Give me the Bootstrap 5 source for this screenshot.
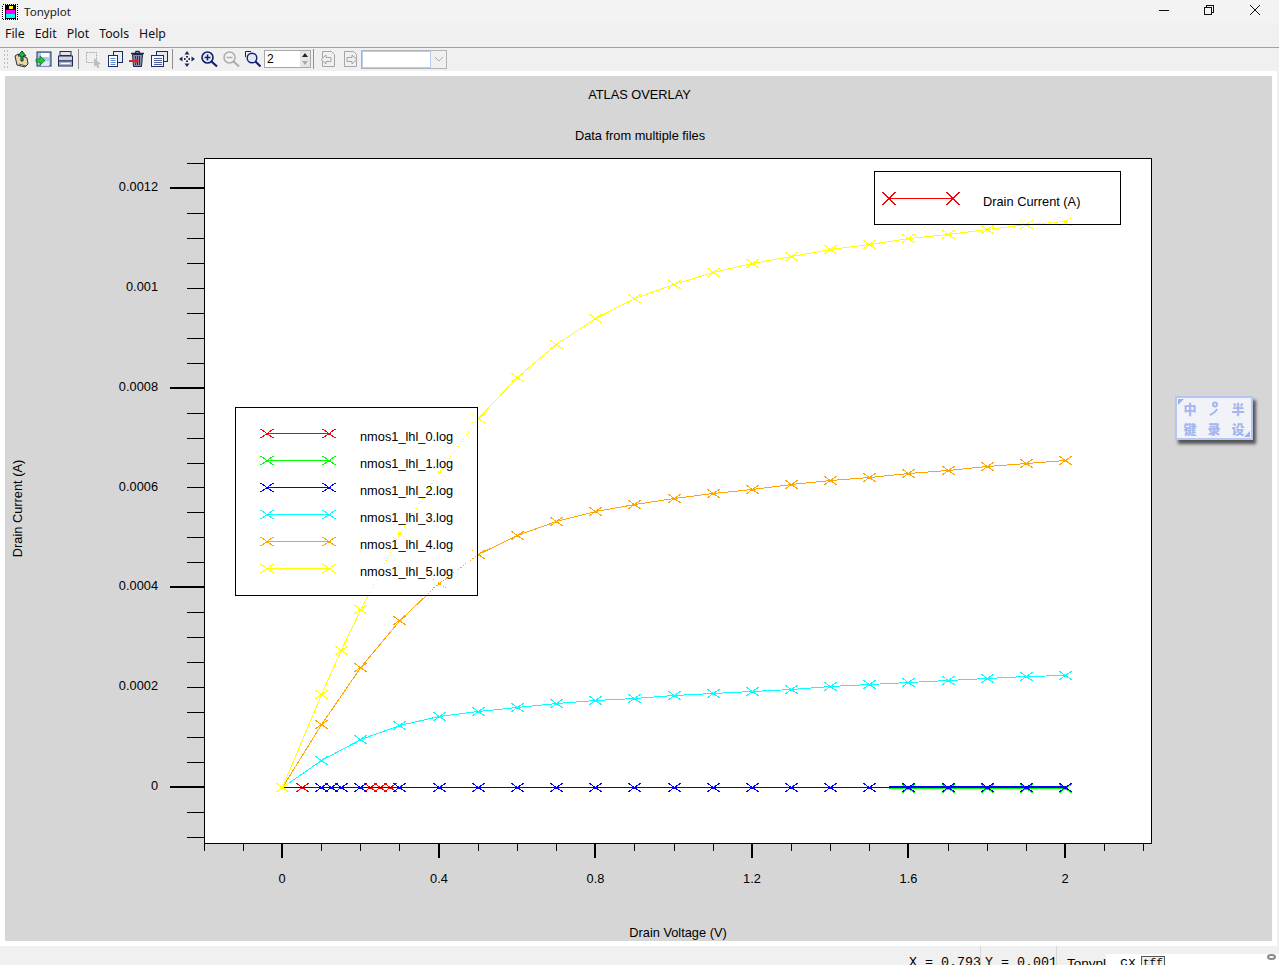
<!DOCTYPE html>
<html lang="en">
<head>
<meta charset="utf-8">
<title>Tonyplot</title>
<link href="https://cdn.jsdelivr.net/npm/bootstrap@5.3.0/dist/css/bootstrap.min.css" rel="stylesheet">
<style>
html,body{margin:0;height:965px;overflow:hidden;background:#f0f0f0}
.app-win{width:1279px;height:965px;overflow:hidden;position:relative;font-family:"Liberation Sans",Arial,sans-serif;color:#000}
.title-bar{height:23px;background:#f3f3f3;font:11.6px "Noto Sans",sans-serif;color:#222}
.title-ico{margin:0 5px 0 2px}
.win-btns{margin-left:auto}
.win-btns svg{display:block}
.menu-bar{height:25px;background:#f0f0f0;border-bottom:1px solid #a0a0a0;padding:0 0 3px 5px;gap:10px;font:12.3px "Noto Sans",sans-serif;color:#111}
.tool-bar{height:23px;background:#f0f0f0;padding:0 0 1px 3px}
.tool-grip{width:6px;height:20px;margin-right:1px;background-image:radial-gradient(#bdbdbd 1px,transparent 1px);background-size:3px 4px}
.tool-sep{width:1px;height:20px;background:#8f8f8f;margin:0 3px 0 2px}
.tool-ico{width:22px;height:22px;flex:none}
.spin-box{width:47px;height:18px;background:#fff;border:1px solid #a8a8a8;font-size:12px;line-height:16px;padding-left:2px;position:relative}
.spin-arrows{margin-left:auto;width:10px;height:16px;background:#e6e6e6}
.combo-box{width:86px;height:19px;background:#f0f0f0;border:1px solid #b0b4b8}
.combo-field{width:69px;height:17px;background:#fff;border:1px solid #b5cdee}
.combo-arrow{flex:1}
.plot-frame{height:875px;width:1277px;background:#fff;padding:5px}
.plot-area{height:865px;width:1267px;background:#d6d6d6}
.plot-area svg{display:block}
.plot-txt{font:12.8px "Liberation Sans",Arial,sans-serif;fill:#000}
.status-row{height:19px;background:#f0f0f0;overflow:hidden}
.stat-cell{font:13.33px "Liberation Mono",monospace;width:76px;height:19px;padding-top:7px;line-height:19px;white-space:pre;border-right:1px solid #d8d8d8}
.stat-app{font:13.5px "Liberation Sans",Arial,sans-serif;width:39px;margin-left:10px;padding-top:8px;line-height:19px;overflow:hidden;height:19px}
.stat-tray{flex:1;height:11px;margin-top:8px;background:#fff;font:13.33px "Liberation Mono",monospace;line-height:17px;padding-left:14px;position:relative;overflow:hidden}
.tray-tag{display:inline-block;border:1px solid #555;font-size:11px;line-height:13px;padding:0 1px;margin-left:5px;background:#eee}
.tray-dot{position:absolute;right:3px;top:0;width:9px;height:6px;border:2px solid #888;border-radius:50%}
.ime-float{position:absolute;left:1175px;top:396px;width:78px;height:44px;background:#f1f3f8;border:2px solid #b4c6f1;box-shadow:3px 4px 3px #555;display:grid;grid-template-columns:repeat(3,1fr);font:900 13px/19px "Noto Sans CJK SC",sans-serif;color:#a3b7ee;text-align:center;padding:1px 1px 0}
.ime-float::before{content:"";position:absolute;left:1px;top:1px;border-top:6px solid #9eb1e2;border-right:6px solid transparent}
.ime-float::after{content:"";position:absolute;right:1px;bottom:1px;border-bottom:6px solid #9eb1e2;border-left:6px solid transparent}
.ime-moon{display:flex;align-items:center;justify-content:center}
</style>
</head>
<body>
<div class="app-win d-flex flex-column">
  <div class="title-bar d-flex align-items-center">
    <svg class="title-ico" width="17" height="17" viewBox="0 0 17 17" shape-rendering="crispEdges"><rect x=".5" y="1.500" width="15" height="15" fill="#fff" stroke="#000" stroke-dasharray="1 1"/><rect x="3" y="2" width="11" height="14" fill="#000"/><rect x="6" y="2" width="5" height="4" fill="#ff0" stroke="#000"/><rect x="4" y="7" width="9" height="4" fill="#f0f"/><rect x="4" y="11" width="9" height="4" fill="#0ff"/></svg>
    <span>Tonyplot</span>
    <svg class="win-btns" width="120" height="23" viewBox="1159 0 120 23" fill="none" stroke="#111" shape-rendering="crispEdges"><path d="M1159 10.500h10"/><rect x="1204.500" y="7.500" width="7" height="7"/><path d="M1206.500 7V5.500h7v7H1212"/><path d="M1250 5l10 10M1260 5l-10 10" shape-rendering="auto"/></svg>
  </div>
  <div class="menu-bar d-flex align-items-center">
    <span>File</span><span>Edit</span><span>Plot</span><span>Tools</span><span>Help</span>
  </div>
  <div class="tool-bar d-flex align-items-center">
    <div class="tool-grip"></div>
    <svg class="tool-ico" viewBox="0 0 22 22"><path d="M5 8l3-2 9 4 1 6-3 3-8-2z" fill="#e8d9a0" stroke="#2b2b55"/><path d="M9 16l7 2" stroke="#555"/><path d="M11 13V8H8l4-5 4 5h-3v5z" fill="#16c72e" stroke="#134"/></svg>
    <svg class="tool-ico" viewBox="0 0 22 22"><rect x="5" y="4" width="14" height="14" fill="#a9cbe8" stroke="#1c2a66"/><rect x="9" y="5" width="8" height="4" fill="#fff"/><rect x="9" y="13" width="8" height="5" fill="#dfe9f3"/><path d="M4 11h4V8l5 4.500L8 17v-3H4z" fill="#18d02e" stroke="#0b5c2e" stroke-width=".7"/></svg>
    <svg class="tool-ico" viewBox="0 0 22 22"><rect x="6" y="3.500" width="11" height="4" fill="#e3e3e3" stroke="#1f2a5a"/><rect x="4.500" y="8" width="14" height="5" fill="#d0d3dd" stroke="#1f2a5a"/><rect x="4.500" y="13" width="14" height="5" fill="#aeb4c6" stroke="#1f2a5a"/><path d="M7 15.500h9" stroke="#fff"/></svg>
    <div class="tool-sep"></div>
    <svg class="tool-ico" viewBox="0 0 22 22"><rect x="4.500" y="4.500" width="10" height="10" fill="none" stroke="#aaa" stroke-dasharray="2 1"/><path d="M12 10l7 6-3 .5 1.500 3-2 .5-1.500-3-2 2z" fill="#bdbdbd"/></svg>
    <svg class="tool-ico" viewBox="0 0 22 22"><rect x="9.500" y="3.500" width="9" height="11" fill="#e8eef6" stroke="#1f2a66"/><rect x="4.500" y="7.500" width="9" height="11" fill="#fff" stroke="#1f2a66"/><path d="M6.500 10.500h5M6.500 12.500h5M6.500 14.500h5M6.500 16.500h5" stroke="#5a8ccc"/></svg>
    <svg class="tool-ico" viewBox="0 0 22 22"><path d="M5 5.500h13M9 5.500l1-2h3l1 2" fill="none" stroke="#1d2450" stroke-width="1.300"/><path d="M6.500 6.500h10l-1 12h-8z" fill="#8a8da0" stroke="#1d2450"/><path d="M9.500 8v9M11.500 8v9M13.500 8v9" stroke="#2a2f55"/><path d="M3 12h6v-2l4 3-4 3v-2H3z" fill="#e0202a"/></svg>
    <svg class="tool-ico" viewBox="0 0 22 22"><rect x="8.500" y="3.500" width="11" height="10" fill="#dfe8f3" stroke="#1f2a66"/><rect x="3.500" y="7.500" width="12" height="11" fill="#f4f6fb" stroke="#1f2a66"/><path d="M6 10.500h8M6 12.500h8M6 14.500h8M6 16.500h8" stroke="#4d5f9a"/></svg>
    <div class="tool-sep"></div>
    <svg class="tool-ico" viewBox="0 0 22 22" fill="#1d2a55"><path d="M11 3l2.500 3.500h-5zM11 19l-2.500-3.500h5zM3 11l3.500-2.500v5zM19 11l-3.500 2.500v-5z"/><rect x="10" y="8" width="2" height="1.500"/><rect x="10" y="12.500" width="2" height="1.500"/><rect x="8" y="10" width="1.500" height="2"/><rect x="12.500" y="10" width="1.500" height="2"/></svg>
    <svg class="tool-ico" viewBox="0 0 22 22"><circle cx="9.500" cy="9.500" r="5.500" fill="#e9eefc" stroke="#14206e" stroke-width="1.600"/><path d="M13.500 13.500l5.500 5" stroke="#14206e" stroke-width="2.200"/><path d="M6.500 9.500h6M9.500 6.500v6" stroke="#14206e" stroke-width="1.600"/></svg>
    <svg class="tool-ico" viewBox="0 0 22 22"><circle cx="9.500" cy="9.500" r="5.500" fill="#f3f3f3" stroke="#adadad" stroke-width="1.500"/><path d="M13.500 13.500l5.500 5" stroke="#adadad" stroke-width="2.200"/><path d="M6.500 9.500h6" stroke="#adadad" stroke-width="1.500"/></svg>
    <svg class="tool-ico" viewBox="0 0 22 22"><path d="M9 3.500H3.500V9" fill="none" stroke="#14206e"/><circle cx="10" cy="10" r="4.800" fill="#dfe7f6" stroke="#14206e" stroke-width="1.400"/><path d="M13.500 13.500l5 5" stroke="#14206e" stroke-width="2.200"/></svg>
    <div class="spin-box d-flex">2<div class="spin-arrows"><svg width="10" height="16" viewBox="0 0 10 16" class="d-block"><path d="M5 2l3 4H2z" fill="#222"/><path d="M5 14l3-4H2z" fill="#aaa"/></svg></div></div>
    <div class="tool-sep"></div>
    <svg class="tool-ico" viewBox="0 0 22 22" fill="none" stroke="#a6a6a6"><path d="M5.500 3.500h9l3 3v12h-12z"/><path d="M9 7v2.500h5v4H9V16l-5-4.500z" fill="#eee"/></svg>
    <svg class="tool-ico" viewBox="0 0 22 22" fill="none" stroke="#a6a6a6"><path d="M5.500 3.500h9l3 3v12h-12z"/><path d="M13 7v2.500H8v4h5V16l5-4.500z" fill="#eee"/></svg>
    <div class="combo-box d-flex"><div class="combo-field"></div><div class="combo-arrow d-flex align-items-center justify-content-center"><svg width="10" height="6" viewBox="0 0 10 6" fill="none" stroke="#aaa"><path d="M1 1l4 4 4-4"/></svg></div></div>
  </div>
  <div class="plot-frame">
    <div class="plot-area">
      <svg id="plotSvg" width="1267" height="865" viewBox="5 76 1267 865">
        <defs>
          <clipPath id="clipMain"><rect x="236" y="408" width="241" height="187"/></clipPath>
          <clipPath id="clipTop"><rect x="875" y="172" width="245" height="52"/></clipPath>
        </defs>
        <rect x="204.500" y="158.500" width="947" height="685" fill="#fff" stroke="#000"/>
        <g id="curveLayer" shape-rendering="crispEdges" fill="none"></g>
        <g text-anchor="middle">
          <text class="plot-txt" x="639.500" y="99">ATLAS OVERLAY</text>
          <text class="plot-txt" x="640" y="140">Data from multiple files</text>
          <text class="plot-txt" x="678" y="937">Drain Voltage (V)</text>
          <text class="plot-txt" transform="translate(22 508.500) rotate(-90)">Drain Current (A)</text>
          <text class="plot-txt" x="282" y="883">0</text>
          <text class="plot-txt" x="439" y="883">0.4</text>
          <text class="plot-txt" x="595.500" y="883">0.8</text>
          <text class="plot-txt" x="752" y="883">1.2</text>
          <text class="plot-txt" x="908.500" y="883">1.6</text>
          <text class="plot-txt" x="1065" y="883">2</text>
        </g>
        <g text-anchor="end">
          <text class="plot-txt" x="158" y="191">0.0012</text>
          <text class="plot-txt" x="158" y="291">0.001</text>
          <text class="plot-txt" x="158" y="391">0.0008</text>
          <text class="plot-txt" x="158" y="491">0.0006</text>
          <text class="plot-txt" x="158" y="590">0.0004</text>
          <text class="plot-txt" x="158" y="690">0.0002</text>
          <text class="plot-txt" x="158" y="790">0</text>
        </g>
        <text class="plot-txt" x="360" y="441">nmos1_lhl_0.log</text>
        <text class="plot-txt" x="360" y="468">nmos1_lhl_1.log</text>
        <text class="plot-txt" x="360" y="495">nmos1_lhl_2.log</text>
        <text class="plot-txt" x="360" y="522">nmos1_lhl_3.log</text>
        <text class="plot-txt" x="360" y="549">nmos1_lhl_4.log</text>
        <text class="plot-txt" x="360" y="576">nmos1_lhl_5.log</text>
        <text class="plot-txt" x="983" y="206">Drain Current (A)</text>
      </svg>
    </div>
  </div>
  <div class="status-row d-flex">
    <div class="stat-cell" style="margin-left:905px;padding-left:4px">X = 0.793</div>
    <div class="stat-cell" style="padding-left:4px">Y = 0.001</div>
    <div class="stat-app">Tonypl</div>
    <div class="stat-tray">cx<span class="tray-tag">tff</span><span class="tray-dot"></span></div>
  </div>
  <div class="ime-float">
    <span>中</span>
    <span class="ime-moon"><svg width="14" height="16" viewBox="0 0 14 16" fill="none" stroke="#a3b7ee" stroke-width="2"><circle cx="8" cy="3.500" r="2"/><path d="M10 8c-1 3-3 4-7 6"/></svg></span>
    <span>半</span>
    <span>键</span><span>录</span><span>设</span>
  </div>
</div>
<script>
(function(){
  var NS='http://www.w3.org/2000/svg';
  var layer=document.getElementById('curveLayer');
  function el(p,n,a){var e=document.createElementNS(NS,n);for(var k in a)e.setAttribute(k,a[k]);p.appendChild(e);return e;}
  function X(v){return 282.5+v*391.5;}
  var xs=[0,.1,.15,.2,.3,.4,.5,.6,.7,.8,.9,1,1.1,1.2,1.3,1.4,1.5,1.6,1.7,1.8,1.9,2];
  var xa=[0,.1,.2,.3,.4,.5,.6,.7,.8,.9,1,1.1,1.2,1.3,1.4,1.5,1.6,1.7,1.8,1.9,2];
  var yellow=[787,694,650,609,533,472,418,377,344,318,298,284,272,263,256,249,244,238,234,229,224,221];
  var orange=[787,724,667,620,583,554,535,521,511,504,498,493,489,484,480,477,473,470,466,463,460];
  var cyan=[787,760,739,725,716,711,707,703,700,698,695,693,691,689,686,684,682,680,678,676,675];
  function marker(g,c,x,y,w,h){
    y+=.5;
    el(g,'path',{d:'M'+(x-w)+' '+(y-h)+'L'+(x+w)+' '+(y+h)+'M'+(x-w)+' '+(y+h)+'L'+(x+w)+' '+(y-h),stroke:c});
    if(h<6)el(g,'rect',{x:x-1.5,y:y-1,width:3,height:2,fill:c});
  }
  function series(g,c,vx,vy){
    var pts=vx.map(function(v,i){return X(v).toFixed(1)+','+(vy[i]+.5);}).join(' ');
    el(g,'polyline',{points:pts,stroke:c});
    vx.forEach(function(v,i){marker(g,c,Math.floor(X(v))+.5,vy[i],6.5,4.5);});
  }
  function flat(g,c,vx,y){
    vx.forEach(function(v){marker(g,c,Math.floor(X(v))+.5,y,6.5,4.5);});
  }
  var ticks=el(layer,'g',{stroke:'#000'});
  var i,t;
  for(i=-9;i<=49;i++){
    var yy=787-i*24.96;
    if(yy<160||yy>842)continue;
    t=Math.round(yy)+.5;
    if(i%8===0)el(ticks,'rect',{x:170,y:Math.round(yy)-1,width:35,height:2,fill:'#000',stroke:'none'});
    else el(ticks,'path',{d:'M187 '+t+'H204'});
  }
  for(i=-2;i<=22;i++){
    var xx=Math.round(282+i*39.15);
    if(i%4===0)el(ticks,'rect',{x:xx-1,y:843,width:2,height:15,fill:'#000',stroke:'none'});
    else el(ticks,'path',{d:'M'+(xx+.5)+' 843V851'});
  }
  var low=el(layer,'g',{});
  flat(low,'#f00',[.05,.225,.25,.275],787);
  el(low,'path',{d:'M889 788.500H1066',stroke:'#0f0'});
  flat(low,'#0f0',[1.6,1.7,1.8,1.9,2],788);
  el(low,'path',{d:'M282 787.500H889',stroke:'#00f'});
  el(low,'path',{d:'M889 787H1066',stroke:'#00f','stroke-width':2});
  flat(low,'#00f',[.1,.125,.15,.2,.3,.4,.5,.6,.7,.8,.9,1,1.1,1.2,1.3,1.4,1.5,1.6,1.7,1.8,1.9,2],787);
  function curves(g){
    series(g,'#0ff',xa,cyan);
    series(g,'#ffa500',xa,orange);
    series(g,'#ff0',xs,yellow);
  }
  curves(el(layer,'g',{}));
  el(layer,'rect',{x:235.5,y:407.5,width:242,height:188,fill:'#fff',stroke:'#000'});
  el(layer,'rect',{x:874.5,y:171.5,width:246,height:53,fill:'#fff',stroke:'#000'});
  curves(el(layer,'g',{'clip-path':'url(#clipMain)','stroke-dasharray':'1 2'}));
  curves(el(layer,'g',{'clip-path':'url(#clipTop)','stroke-dasharray':'2 1'}));
  var cols=['#f00','#0f0','#00f','#0ff','#ffa500','#ff0'];
  var lg=el(layer,'g',{});
  cols.forEach(function(c,k){
    var y=433+k*27;
    el(lg,'path',{d:'M267 '+(y+.5)+'H329',stroke:c});
    marker(lg,c,267,y,6.5,4.5);marker(lg,c,329,y,6.5,4.5);
  });
  el(lg,'path',{d:'M889 198.500H953',stroke:'#f00'});
  marker(lg,'#f00',889,198,6.5,6.5);marker(lg,'#f00',953,198,6.5,6.5);
})();
</script>
</body>
</html>
